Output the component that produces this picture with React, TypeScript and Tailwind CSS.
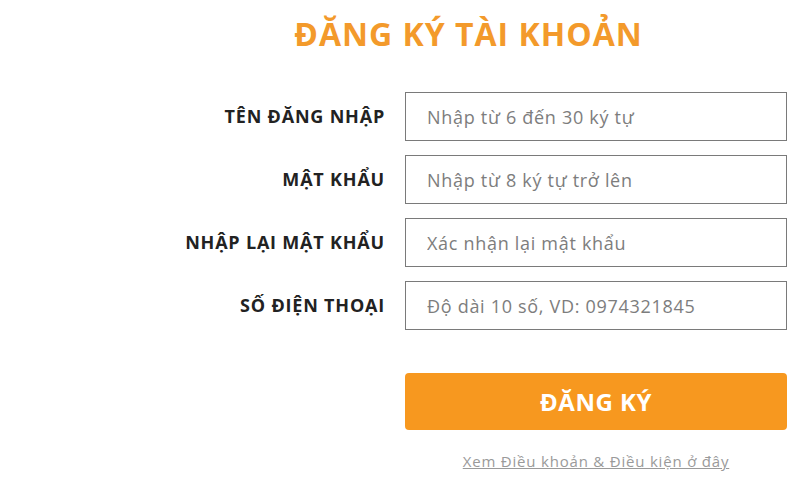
import React from 'react';

const fields = [
  { label: 'TÊN ĐĂNG NHẬP', placeholder: 'Nhập từ 6 đến 30 ký tự' },
  { label: 'MẬT KHẨU', placeholder: 'Nhập từ 8 ký tự trở lên' },
  { label: 'NHẬP LẠI MẬT KHẨU', placeholder: 'Xác nhận lại mật khẩu' },
  { label: 'SỐ ĐIỆN THOẠI', placeholder: 'Độ dài 10 số, VD: 0974321845' },
];

export default function App() {
  return (
    <div className="w-[800px] h-[488px] bg-white font-['Open_Sans',sans-serif] overflow-hidden">
      <div className="ml-[150px] w-[637px] flex flex-col">
        <h1 className="mt-[12px] h-[44px] text-center text-[32px] leading-[44px] tracking-[1px] font-bold text-[#f39a2b]">
          ĐĂNG KÝ TÀI KHOẢN
        </h1>

        <div className="mt-[36px] flex flex-col gap-[14px]">
          {fields.map(f => (
            <div key={f.label} className="flex items-center">
              <label className="w-[255px] shrink-0 pr-5 text-right text-[18px] tracking-[0.8px] font-bold text-[#222]">
                {f.label}
              </label>
              <input
                type="text"
                placeholder={f.placeholder}
                className="w-[382px] shrink-0 h-[49px] border border-[#7a7a7a] px-[21px] text-[18px] tracking-[0.7px] text-[#333] placeholder:text-[#7d7d7d] outline-none"
              />
            </div>
          ))}
        </div>

        <div className="ml-[255px] w-[382px] mt-[43px] flex flex-col items-center">
          <button className="w-full h-[57px] rounded-[4px] bg-[#f7981f] text-white text-[24px] tracking-[0.5px] font-bold">
            ĐĂNG KÝ
          </button>
          <a href="#" className="mt-[20px] text-[15px] tracking-[0.8px] text-[#9a9a9a] underline">
            Xem Điều khoản &amp; Điều kiện ở đây
          </a>
        </div>
      </div>
    </div>
  );
}
